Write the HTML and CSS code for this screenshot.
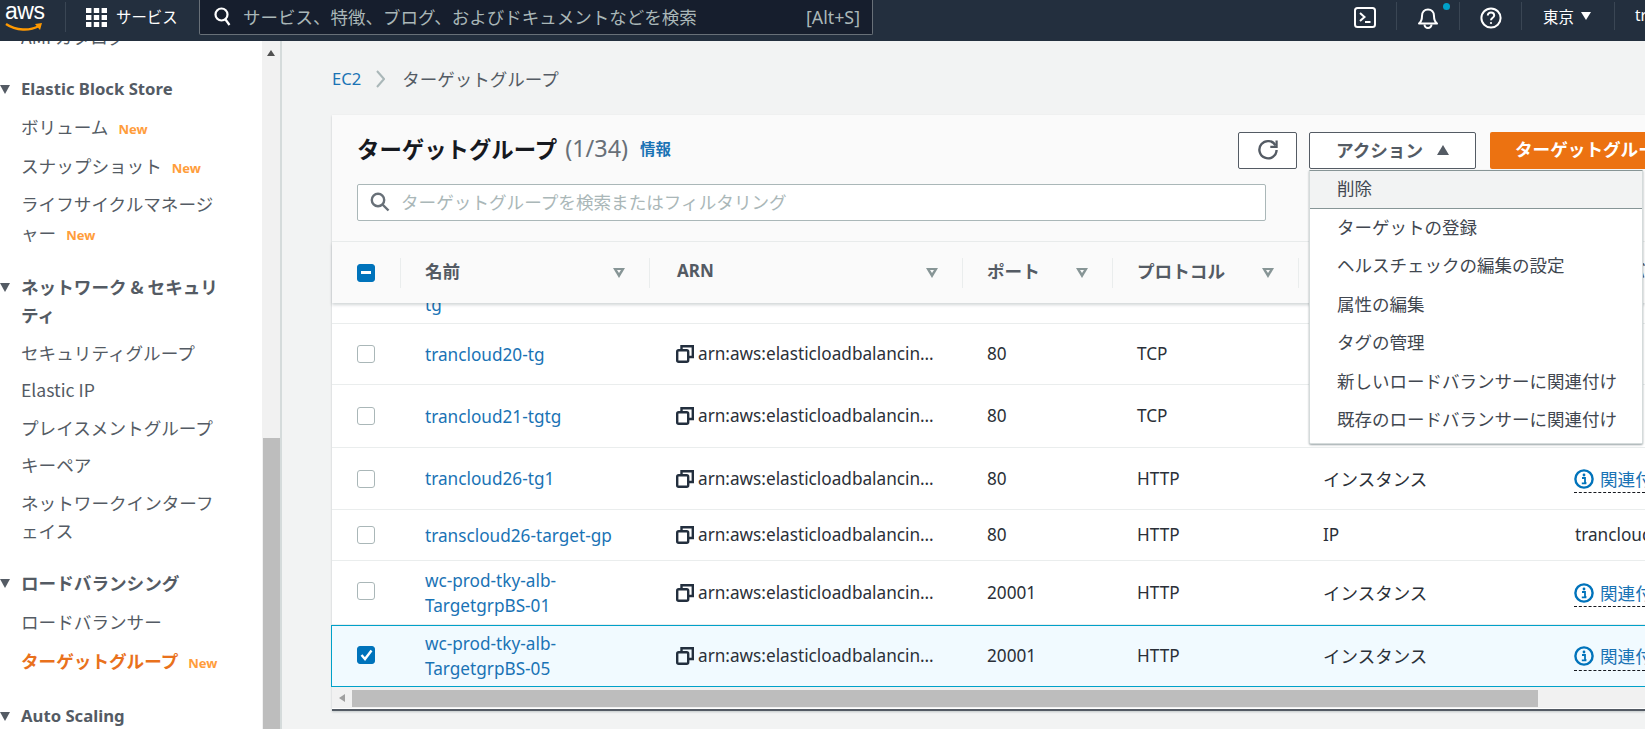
FILE: index.html
```html
<!DOCTYPE html>
<html lang="ja">
<head>
<meta charset="utf-8">
<title>ターゲットグループ | EC2</title>
<link rel="stylesheet" href="styles.css">
</head>
<body>
<header class="topbar">
  <div class="logo">
    <span class="logo-text">aws</span>
    <svg class="logo-smile" width="40" height="10" viewBox="0 0 40 10"><path d="M2 2 C12 9 26 9 35 4" fill="none" stroke="#f90" stroke-width="2.4"/><path d="M31 2 L38 1 L36 8 Z" fill="#f90"/></svg>
  </div>
  <div class="services">
    <svg width="21" height="19" viewBox="0 0 21 19" fill="#fff"><rect x="0" y="0" width="5.4" height="5"/><rect x="7.8" y="0" width="5.4" height="5"/><rect x="15.6" y="0" width="5.4" height="5"/><rect x="0" y="7" width="5.4" height="5"/><rect x="7.8" y="7" width="5.4" height="5"/><rect x="15.6" y="7" width="5.4" height="5"/><rect x="0" y="14" width="5.4" height="5"/><rect x="7.8" y="14" width="5.4" height="5"/><rect x="15.6" y="14" width="5.4" height="5"/></svg>
    <span>サービス</span>
  </div>
  <div class="global-search">
    <svg width="17" height="19" viewBox="0 0 17 19" fill="none" stroke="#fff" stroke-width="2.2"><circle cx="7.5" cy="7.5" r="6"/><path d="M11.5 12.5 L15.5 18"/></svg>
    <span class="global-placeholder">サービス、特徴、ブログ、およびドキュメントなどを検索</span>
    <span class="global-key">[Alt+S]</span>
  </div>
  <nav class="top-actions">
    <div class="top-cell cell-term">
      <svg width="22" height="21" viewBox="0 0 22 21" fill="none" stroke="#fff" stroke-width="2"><rect x="1" y="1" width="20" height="19" rx="2.5"/><path d="M6 6 L10.5 10 L6 14"/><path d="M11 15 H16.5"/></svg>
    </div>
    <div class="top-cell cell-bell">
      <svg width="22" height="22" viewBox="0 0 22 22" fill="none" stroke="#fff" stroke-width="2"><path d="M2 16.5 C5 14 5 12 5 9 C5 5 7.5 2.5 11 2.5 C14.5 2.5 17 5 17 9 C17 12 17 14 20 16.5 Z" stroke-linejoin="round"/><path d="M7.5 17.5 A3.5 3.5 0 0 0 14.5 17.5"/></svg>
      <span class="bell-dot"></span>
    </div>
    <div class="top-cell cell-help">
      <svg width="22" height="22" viewBox="0 0 22 22" fill="none" stroke="#fff" stroke-width="2"><circle cx="11" cy="11" r="9.6"/><path d="M7.8 8.6 C7.8 6.6 9.3 5.6 11 5.6 C12.9 5.6 14.2 6.8 14.2 8.4 C14.2 10.6 11 10.8 11 13.2"/><circle cx="11" cy="16" r="1.1" fill="#fff" stroke="none"/></svg>
    </div>
    <div class="top-cell cell-region"><span>東京</span><i class="tri-down"></i></div>
    <div class="top-cell cell-user">trancloud</div>
  </nav>
</header>

<div class="layout">
  <aside class="sidebar">
    <div class="side-scroll">
      <div class="clipped-item"><span>AMI カタログ</span></div>

      <h3 class="side-head"><i class="side-tri"></i>Elastic Block Store</h3>
      <a class="side-item">ボリューム<b class="new">New</b></a>
      <a class="side-item">スナップショット<b class="new">New</b></a>
      <a class="side-item">ライフサイクルマネージャー<b class="new">New</b></a>

      <h3 class="side-head head-cjk"><i class="side-tri"></i>ネットワーク &amp; セキュリティ</h3>
      <a class="side-item tight">セキュリティグループ</a>
      <a class="side-item tight">Elastic IP</a>
      <a class="side-item tight">プレイスメントグループ</a>
      <a class="side-item tight">キーペア</a>
      <a class="side-item tight">ネットワークインターフェイス</a>

      <h3 class="side-head head-cjk head-lb"><i class="side-tri"></i>ロードバランシング</h3>
      <a class="side-item">ロードバランサー</a>
      <a class="side-item active">ターゲットグループ<b class="new">New</b></a>

      <h3 class="side-head head-last"><i class="side-tri"></i>Auto Scaling</h3>
    </div>
    <div class="side-track">
      <i class="tri-up"></i>
      <div class="side-thumb"></div>
    </div>
  </aside>

  <main class="content">
    <div class="breadcrumb">
      <a class="crumb-link">EC2</a>
      <svg width="9" height="20" viewBox="0 0 9 20" fill="none" stroke="#aab7b8" stroke-width="2"><path d="M1 2 L8 10 L1 18"/></svg>
      <span>ターゲットグループ</span>
    </div>

    <section class="panel">
      <div class="panel-head">
        <div class="title-row">
          <div class="title-wrap">
            <h1 class="title">ターゲットグループ</h1>
            <span class="count">(1/34)</span>
            <a class="info-link">情報</a>
          </div>
          <button class="btn btn-refresh">
            <svg width="22" height="22" viewBox="0 0 22 22" fill="none" stroke="#545b64" stroke-width="2.4"><path d="M18.5 6.5 A8.6 8.6 0 1 0 19.6 11"/><path d="M19.6 1.5 V7.8 H13.3" stroke-width="2.2"/></svg>
          </button>
          <button class="btn btn-action">アクション<i class="tri-up-dark"></i></button>
          <button class="btn-primary">ターゲットグループの作成</button>
        </div>
        <div class="filter">
          <svg width="20" height="20" viewBox="0 0 20 20" fill="none" stroke="#687078" stroke-width="2.4"><circle cx="8" cy="8" r="6.2"/><path d="M12.5 12.5 L18.5 18.5"/></svg>
          <span>ターゲットグループを検索またはフィルタリング</span>
        </div>
      </div>

      <div class="row row-head">
        <div class="cell"><span class="check check-mixed"></span></div>
        <div class="cell hcell"><span>名前</span><i class="sort"></i></div>
        <div class="cell hcell hlatin"><span>ARN</span><i class="sort"></i></div>
        <div class="cell hcell"><span>ポート</span><i class="sort"></i></div>
        <div class="cell hcell"><span>プロトコル</span><i class="sort"></i></div>
        <div class="cell hcell"><span>ターゲットタイプ</span></div>
        <div class="cell hcell"><span>ロードバランサー</span></div>
      </div>

      <div class="row row-clip"><div class="cell"></div><div class="cell"><a class="link">tg</a></div></div>

      <div class="row row-a">
        <div class="cell"><span class="check"></span></div>
        <div class="cell"><a class="link">trancloud20-tg</a></div>
        <div class="cell arn"><svg class="copy" width="18" height="18" viewBox="0 0 18 18" fill="none" stroke="#232f3e" stroke-width="2.4"><path d="M5.5 4.5 V1.2 H16.8 V12 H13"/><rect x="1.2" y="5.2" width="11" height="11.6" rx="1.5"/></svg><span class="arn-text">arn:aws:elasticloadbalancin…</span></div>
        <div class="cell txt">80</div>
        <div class="cell txt">TCP</div>
        <div class="cell txt jp"></div>
        <div class="cell txt"></div>
      </div>
      <div class="row row-b">
        <div class="cell"><span class="check"></span></div>
        <div class="cell"><a class="link">trancloud21-tgtg</a></div>
        <div class="cell arn"><svg class="copy" width="18" height="18" viewBox="0 0 18 18" fill="none" stroke="#232f3e" stroke-width="2.4"><path d="M5.5 4.5 V1.2 H16.8 V12 H13"/><rect x="1.2" y="5.2" width="11" height="11.6" rx="1.5"/></svg><span class="arn-text">arn:aws:elasticloadbalancin…</span></div>
        <div class="cell txt">80</div>
        <div class="cell txt">TCP</div>
        <div class="cell txt jp"></div>
        <div class="cell txt"></div>
      </div>
      <div class="row row-c">
        <div class="cell"><span class="check"></span></div>
        <div class="cell"><a class="link">trancloud26-tg1</a></div>
        <div class="cell arn"><svg class="copy" width="18" height="18" viewBox="0 0 18 18" fill="none" stroke="#232f3e" stroke-width="2.4"><path d="M5.5 4.5 V1.2 H16.8 V12 H13"/><rect x="1.2" y="5.2" width="11" height="11.6" rx="1.5"/></svg><span class="arn-text">arn:aws:elasticloadbalancin…</span></div>
        <div class="cell txt">80</div>
        <div class="cell txt">HTTP</div>
        <div class="cell txt jp">インスタンス</div>
        <div class="cell assoc"><svg width="20" height="20" viewBox="0 0 20 20"><circle cx="10" cy="10" r="8.6" fill="none" stroke="#0073bb" stroke-width="2.4"/><circle cx="10" cy="6" r="1.4" fill="#0073bb"/><path d="M8 9 H11 V14 H12.4 M7.8 14.4 H12.4" fill="none" stroke="#0073bb" stroke-width="1.8"/></svg><span>関連付けなし</span></div>
      </div>
      <div class="row row-d">
        <div class="cell"><span class="check"></span></div>
        <div class="cell"><a class="link">transcloud26-target-gp</a></div>
        <div class="cell arn"><svg class="copy" width="18" height="18" viewBox="0 0 18 18" fill="none" stroke="#232f3e" stroke-width="2.4"><path d="M5.5 4.5 V1.2 H16.8 V12 H13"/><rect x="1.2" y="5.2" width="11" height="11.6" rx="1.5"/></svg><span class="arn-text">arn:aws:elasticloadbalancin…</span></div>
        <div class="cell txt">80</div>
        <div class="cell txt">HTTP</div>
        <div class="cell txt">IP</div>
        <div class="cell txt">trancloud26-alb</div>
      </div>
      <div class="row row-e">
        <div class="cell"><span class="check"></span></div>
        <div class="cell"><a class="link">wc-prod-tky-alb-<br>TargetgrpBS-01</a></div>
        <div class="cell arn"><svg class="copy" width="18" height="18" viewBox="0 0 18 18" fill="none" stroke="#232f3e" stroke-width="2.4"><path d="M5.5 4.5 V1.2 H16.8 V12 H13"/><rect x="1.2" y="5.2" width="11" height="11.6" rx="1.5"/></svg><span class="arn-text">arn:aws:elasticloadbalancin…</span></div>
        <div class="cell txt">20001</div>
        <div class="cell txt">HTTP</div>
        <div class="cell txt jp">インスタンス</div>
        <div class="cell assoc"><svg width="20" height="20" viewBox="0 0 20 20"><circle cx="10" cy="10" r="8.6" fill="none" stroke="#0073bb" stroke-width="2.4"/><circle cx="10" cy="6" r="1.4" fill="#0073bb"/><path d="M8 9 H11 V14 H12.4 M7.8 14.4 H12.4" fill="none" stroke="#0073bb" stroke-width="1.8"/></svg><span>関連付けなし</span></div>
      </div>
      <div class="row row-e row-selected">
        <div class="cell"><span class="check check-on"><svg width="13" height="12" viewBox="0 0 13 12" fill="none" stroke="#fff" stroke-width="2.4"><path d="M1.5 6 L5 10 L11.5 1.5"/></svg></span></div>
        <div class="cell"><a class="link">wc-prod-tky-alb-<br>TargetgrpBS-05</a></div>
        <div class="cell arn"><svg class="copy" width="18" height="18" viewBox="0 0 18 18" fill="none" stroke="#232f3e" stroke-width="2.4"><path d="M5.5 4.5 V1.2 H16.8 V12 H13"/><rect x="1.2" y="5.2" width="11" height="11.6" rx="1.5"/></svg><span class="arn-text">arn:aws:elasticloadbalancin…</span></div>
        <div class="cell txt">20001</div>
        <div class="cell txt">HTTP</div>
        <div class="cell txt jp">インスタンス</div>
        <div class="cell assoc"><svg width="20" height="20" viewBox="0 0 20 20"><circle cx="10" cy="10" r="8.6" fill="none" stroke="#0073bb" stroke-width="2.4"/><circle cx="10" cy="6" r="1.4" fill="#0073bb"/><path d="M8 9 H11 V14 H12.4 M7.8 14.4 H12.4" fill="none" stroke="#0073bb" stroke-width="1.8"/></svg><span>関連付けなし</span></div>
      </div>

      <div class="hscroll">
        <i class="tri-left"></i>
        <div class="hthumb"></div>
      </div>

      <ul class="menu">
        <li class="menu-item menu-hover">削除</li>
        <li class="menu-item">ターゲットの登録</li>
        <li class="menu-item">ヘルスチェックの編集の設定</li>
        <li class="menu-item">属性の編集</li>
        <li class="menu-item">タグの管理</li>
        <li class="menu-item">新しいロードバランサーに関連付け</li>
        <li class="menu-item">既存のロードバランサーに関連付け</li>
      </ul>
    </section>
    <div class="below"><span class="below-tab"></span></div>
  </main>
</div>
</body>
</html>
```

FILE: styles.css
```css
* { box-sizing: border-box; }
html, body { margin: 0; height: 729px; overflow: hidden; }
body {
  font-family: "Noto Sans CJK JP", "Noto Sans", sans-serif;
  font-size: 17.6px;
  color: #16191f;
  background: #f2f3f3;
}
h1, h3, ul { margin: 0; padding: 0; }
i { display: block; }

/* top bar */
.topbar { height: 41px; background: #232f3e; display: flex; color: #fff; }
.logo { width: 66px; height: 30px; margin-top: 2px; border-right: 1px solid #3a4654; position: relative; flex: none; }
.logo-text { position: absolute; left: 5px; top: -4px; font: 400 23px/26px "Liberation Sans", sans-serif; letter-spacing: -0.5px; }
.logo-smile { position: absolute; left: 4px; top: 20px; }
.services { width: 133px; flex: none; display: flex; align-items: flex-start; padding: 6px 0 0 20px; gap: 9px; font-size: 15.4px; line-height: 20px; }
.services svg { margin-top: 2px; }
.global-search { width: 674px; height: 35px; flex: none; background: #161e2d; border: 1px solid #687078; border-top: 0; border-radius: 0 0 2px 2px; display: flex; align-items: flex-start; padding: 7px 12px 0 14px; }
.global-placeholder { margin-left: 12px; color: #aab7b8; font-size: 17.5px; line-height: 20px; flex: 1; }
.global-key { color: #aab7b8; font: 17.8px/20px "Noto Sans", sans-serif; }
.top-actions { flex: 1; display: flex; justify-content: flex-end; overflow: hidden; }
.top-cell { height: 28px; margin-top: 2px; border-left: 1px solid #3a4654; display: flex; align-items: center; justify-content: center; position: relative; flex: none; }
.cell-term { width: 63px; border-left: 0; }
.cell-bell { width: 63px; }
.cell-help { width: 62px; }
.cell-region { width: 93px; gap: 7px; font-size: 15.4px; justify-content: flex-start; padding-left: 21px; }
.cell-user { width: 31px; padding-left: 20px; justify-content: flex-start; font: 15.4px/20px "Noto Sans", sans-serif; white-space: nowrap; overflow: hidden; }
.top-cell svg { margin-top: 3px; }
.bell-dot { position: absolute; left: 46px; top: 1px; width: 7px; height: 7px; border-radius: 50%; background: #00a1c9; }
.tri-down { width: 0; height: 0; border-left: 5.5px solid transparent; border-right: 5.5px solid transparent; border-top: 8px solid #fff; }

/* layout */
.layout { display: flex; height: 688px; }
.sidebar { width: 282px; flex: none; display: flex; background: #fff; border-right: 2px solid #d5dbdb; }
.side-scroll { width: 262px; flex: none; padding-right: 40px; overflow: hidden; color: #545b64; }
.clipped-item { height: 6px; margin-left: 21px; overflow: hidden; display: flex; align-items: flex-end; line-height: 20px; }
.clipped-item span { white-space: nowrap; }
.side-head { font: 700 16.7px/28px "Noto Sans", "Noto Sans CJK JP", sans-serif; padding-left: 21px; margin: 28px 0 5px; position: relative; color: #545b64; }
.head-cjk { font-family: "Noto Sans CJK JP", sans-serif; font-size: 17.6px; margin-top: 21px; }
.head-lb { margin-top: 19px; margin-bottom: 6px; }
.head-last { margin-top: 22px; }
.side-tri { position: absolute; left: 0; top: 10px; width: 0; height: 0; border-left: 5.5px solid transparent; border-right: 5.5px solid transparent; border-top: 9px solid #545b64; }
.side-item { display: block; margin-left: 21px; padding: 5px 0; line-height: 28.5px; }
.tight { padding: 4.5px 0; }
.new { font: 700 13px/18px "Noto Sans", sans-serif; color: #ff9d3b; margin-left: 10px; }
.active { color: #e9711c; font-weight: 700; }
.side-track { width: 18px; flex: none; background: #f1f1f1; display: flex; flex-direction: column; justify-content: space-between; align-items: center; padding-top: 9px; }
.tri-up { width: 0; height: 0; border-left: 4px solid transparent; border-right: 4px solid transparent; border-bottom: 6px solid #505050; }
.side-thumb { width: 17px; height: 291px; background: #bdbdbd; }

/* main */
.content { flex: 1; padding-left: 50px; overflow: hidden; min-width: 0; }
.breadcrumb { height: 74px; display: flex; align-items: center; color: #545b64; font-size: 17.5px; padding-top: 1px; }
.breadcrumb svg { margin: 0 17px 0 15px; }
.crumb-link { color: #1a73b5; font: 16.6px/20px "Noto Sans", sans-serif; }
.panel { position: relative; width: 1313px; background: #fff; box-shadow: 0 1px 2px rgba(0,28,36,.2); border-bottom: 2px solid #545b64; padding-bottom: 1px; }
.panel-head { background: #fafafa; height: 127px; padding: 17px 0 0 25px; border-bottom: 1px solid #eaeded; }
.title-row { display: flex; height: 37px; }
.title-wrap { flex: 0 0 881px; display: flex; align-items: center; padding-bottom: 5px; }
.title { font-size: 22.4px; line-height: 36px; font-weight: 700; }
.count { font: 400 23.4px/36px "Noto Sans", sans-serif; color: #687078; margin-left: 8px; }
.info-link { color: #1a73b5; font-size: 15.4px; font-weight: 700; margin-left: 12px; }
.btn { height: 37px; background: #fff; border: 1px solid #545b64; border-radius: 2px; display: flex; align-items: center; justify-content: center; padding: 0 0 2px; color: #545b64; font: 700 17.6px/20px "Noto Sans CJK JP", sans-serif; }
.btn-refresh { width: 59px; flex: none; margin-right: 12px; }
.btn-action { width: 167px; flex: none; margin-right: 14px; gap: 14px; }
.tri-up-dark { width: 0; height: 0; border-left: 6.5px solid transparent; border-right: 6.5px solid transparent; border-bottom: 10px solid #545b64; }
.btn-primary { width: 260px; flex: none; height: 37px; background: #ec7211; border: 0; border-radius: 2px; color: #fff; font: 700 17.6px/20px "Noto Sans CJK JP", sans-serif; padding: 0 0 3px 25px; text-align: left; white-space: nowrap; }
.filter { width: 909px; height: 37px; margin-top: 15px; background: #fff; border: 1px solid #aab7b8; border-radius: 2px; display: flex; align-items: center; padding: 0 0 2px 12px; gap: 11px; color: #aab7b8; }

/* table */
.row { display: grid; grid-template-columns: 68px 249px 313px 150px 186px 252px 95px; align-items: center; background: #fff; border-bottom: 1px solid #eaeded; }
.cell { padding-left: 25px; min-width: 0; white-space: nowrap; overflow: hidden; }
.cell:first-child { display: flex; align-items: center; }
.row-head { height: 61px; background: #fafafa; border-bottom: 0; box-shadow: 0 2px 3px rgba(0,28,36,.18); position: relative; z-index: 1; }
.hcell { height: 30px; display: flex; align-items: center; justify-content: space-between; border-left: 1px solid #eaeded; padding: 0 24px 4px 24px; font-weight: 700; color: #545b64; line-height: 24px; }
.hlatin { font-family: "Noto Sans", sans-serif; font-size: 17px; padding-left: 27px; }
.sort { width: 0; height: 0; border-left: 6.5px solid transparent; border-right: 6.5px solid transparent; border-top: 10px solid #879596; flex: none; position: relative; margin-top: 4px; }
.sort::after { content: ""; position: absolute; left: -2.5px; top: -8px; border-left: 2.5px solid transparent; border-right: 2.5px solid transparent; border-top: 3.5px solid #fafafa; }
.row-clip { height: 21px; align-items: end; overflow: hidden; }
.row-clip .cell { height: 20px; display: flex; align-items: flex-end; }
.row-clip .link { margin-bottom: 6px; }
.row-a { height: 61px; }
.row-b { height: 63px; }
.row-c { height: 62px; }
.row-d { height: 51px; }
.row-e { height: 64px; }
.row-e .check { margin-bottom: 3px; }
.row-selected { height: 62px; background: #f1faff; border: 1px solid #00a1c9; border-right: 0; margin-left: -1px; width: 1314px; }
.check { display: block; width: 18px; height: 18px; background: #fff; border: 1px solid #aab7b8; border-radius: 3px; }
.check-mixed { background: #0073bb; border-color: #0073bb; position: relative; }
.check-mixed::after { content: ""; position: absolute; left: 3px; right: 3px; top: 6.5px; height: 3px; background: #fff; }
.check-on { background: #0073bb; border-color: #0073bb; display: flex; align-items: center; justify-content: center; }
.link { color: #1a73b5; font: 17.2px/25px "Noto Sans", sans-serif; display: block; }
.arn { display: flex; align-items: center; gap: 4px; padding-left: 27px; }
.copy { flex: none; }
.arn-text { font: 17.2px/24px "Noto Sans", sans-serif; color: #2b3038; }
.txt { font: 17.2px/24px "Noto Sans", sans-serif; color: #2b3038; }
.jp { font-family: "Noto Sans CJK JP", sans-serif; font-size: 17.5px; }
.assoc { display: flex; align-items: center; gap: 6px; color: #1a73b5; line-height: 24px; height: 31px; padding-left: 24px; position: relative; }
.assoc svg { flex: none; }
.assoc::after { content: ""; position: absolute; left: 24px; right: 0; bottom: 1px; border-bottom: 1px dashed #16191f; }

.hscroll { height: 21px; background: #f1f1f1; display: flex; align-items: center; padding: 1px 0 0 7px; }
.tri-left { width: 0; height: 0; border-top: 4px solid transparent; border-bottom: 4px solid transparent; border-right: 6px solid #a0a0a0; flex: none; }
.hthumb { width: 1186px; height: 17px; margin-left: 7px; background: #bdbdbd; flex: none; }

/* dropdown */
.menu { position: absolute; left: 977px; top: 55px; width: 334px; list-style: none; background: #fff; border: 1px solid #d5dbdb; border-top: 1px solid #879596; border-radius: 0 0 2px 2px; box-shadow: 0 1px 2px rgba(0,28,36,.4); z-index: 5; padding-bottom: 3px; }
.menu-item { height: 38.4px; padding: 0 0 3px 27px; display: flex; align-items: center; color: #414750; font-size: 17.5px; line-height: 24px; white-space: nowrap; }
.menu-hover { background: #f2f3f3; border-bottom: 1px solid #879596; }

.below { padding: 18px 0 0 646px; }
.below-tab { display: block; width: 21px; height: 2px; background: #8a8f8f; }
```
